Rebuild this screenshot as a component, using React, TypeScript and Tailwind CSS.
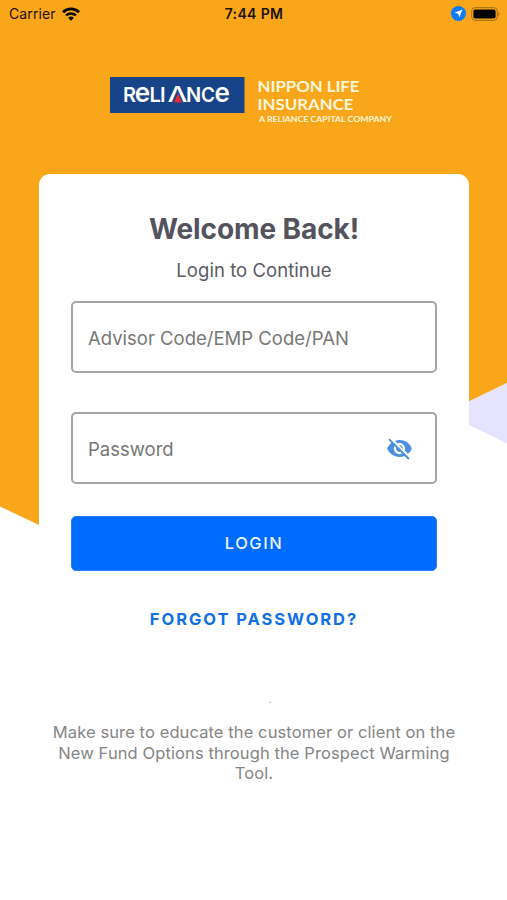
const Backdrop = () => (
  <svg
    className="absolute inset-0 -z-10"
    width="507"
    height="900"
    viewBox="0 0 507 900"
    fill="none"
  >
    <path d="M0 0H507V383L469 401.5 254 630 39 525 0 506.500Z" fill="#faa61a" />
    <path d="M507 383V443.500L469 425V401.500Z" fill="#e6e3fe" />
  </svg>
);

const StatusBar = () => (
  <div className="grid h-[27px] grid-cols-3 items-center pl-[9px] pr-[6px] text-[#1c1303]">
    <div className="flex items-center gap-[6px]">
      <span className="text-[14px] tracking-[0.1px]">Carrier</span>
      <svg width="18" height="14" viewBox="0 0 18 14" fill="none">
        <path d="M1 5.200A11.500 11.500 0 0 1 17 5.200" stroke="#000" strokeWidth="2.800" />
        <path d="M4 8.400A7.300 7.300 0 0 1 14 8.400" stroke="#000" strokeWidth="2.500" />
        <path d="M6.200 10.900A4 4 0 0 1 11.800 10.900L9 13.700Z" fill="#000" />
      </svg>
    </div>
    <span className="-ml-[2px] text-center text-[14px] font-semibold tracking-[0.350px]">
      7:44 PM
    </span>
    <div className="flex items-center justify-end gap-[5px]">
      <svg width="15" height="15" viewBox="0 0 15 15">
        <circle cx="7.500" cy="7.500" r="7.500" fill="#0a7aff" />
        <path d="M11.600 3.400L8.300 11.500 7.300 7.700 3.500 6.700Z" fill="#fff" />
      </svg>
      <svg width="30" height="14" viewBox="0 0 30 14">
        <rect x="0.700" y="0.700" width="25.600" height="12.600" rx="3.500" fill="none" stroke="#9c6a17" strokeWidth="1" />
        <rect x="2.400" y="2.400" width="22.200" height="9.200" rx="2" fill="#000" />
        <path d="M27.500 4.800Q29.700 7 27.500 9.200Z" fill="#9c6a17" />
      </svg>
    </div>
  </div>
);

const Logo = () => (
  <svg
    className="ml-[110px] mt-[49px]"
    width="290"
    height="52"
    viewBox="110 76 290 52"
    fontFamily="Inter, sans-serif"
  >
    <rect x="110" y="77" width="134.500" height="36" fill="#174489" />
    <g fill="#fff" fontWeight="600" fontSize="20">
      <text y="102">
        <tspan x="123">R</tspan>
        <tspan x="134.700" fontSize="26">e</tspan>
        <tspan x="149.500">L</tspan>
        <tspan x="160">I</tspan>
      </text>
      <text x="167.500" y="102" fontSize="21.500" fontWeight="500" textLength="20" lengthAdjust="spacingAndGlyphs">
        Λ
      </text>
      <text y="102">
        <tspan x="186">N</tspan>
        <tspan x="201" textLength="14" lengthAdjust="spacingAndGlyphs">C</tspan>
        <tspan x="214.500" fontSize="26">e</tspan>
      </text>
    </g>
    <path d="M178 93L182 102.500H174Z" fill="#e22a35" />
    <g fill="#fff7dd" fontFamily="Lato, sans-serif" fontWeight="700">
      <text x="257.500" y="91.500" fontSize="15.500" textLength="102" lengthAdjust="spacingAndGlyphs">
        NIPPON LIFE
      </text>
      <text x="257.500" y="109.500" fontSize="15.500" textLength="96" lengthAdjust="spacingAndGlyphs">
        INSURANCE
      </text>
      <text x="259" y="122.300" fontSize="7.500" textLength="133" lengthAdjust="spacingAndGlyphs">
        A RELIANCE CAPITAL COMPANY
      </text>
    </g>
  </svg>
);

const EyeOffIcon = () => (
  <svg width="27" height="27" viewBox="0 0 24 24" fill="#4a90e2">
    <path d="M12 7c2.760 0 5 2.240 5 5 0 .650-.130 1.260-.360 1.830l2.920 2.920c1.510-1.260 2.700-2.890 3.430-4.750-1.730-4.390-6-7.500-11-7.500-1.400 0-2.740.250-3.980.700l2.160 2.160C10.740 7.130 11.350 7 12 7zM2 4.270l2.280 2.280.460.460C3.080 8.300 1.780 10.020 1 12c1.730 4.390 6 7.500 11 7.500 1.550 0 3.030-.300 4.380-.840l.420.420L19.730 22 21 20.730 3.270 3 2 4.270zM7.530 9.800l1.550 1.550c-.050.210-.080.430-.080.650 0 1.660 1.340 3 3 3 .220 0 .440-.030.650-.080l1.550 1.550c-.670.330-1.410.530-2.200.530-2.760 0-5-2.240-5-5 0-.790.200-1.530.530-2.200zm4.310-.780l3.150 3.150.020-.160c0-1.660-1.340-3-3-3l-.170.010z" />
  </svg>
);

const App = () => {
  return (
    <div className="relative isolate h-[900px] w-[507px] overflow-hidden bg-white font-['Inter',sans-serif]">
      <Backdrop />
      <StatusBar />
      <Logo />
      <main className="ml-[39px] mr-[38px] mt-[46px] h-[726px] rounded-t-[11px] bg-white px-8 pt-[37px]">
        <h1 className="text-center text-[28px] font-bold leading-9 tracking-[-0.100px] text-[#53535e]">
          Welcome Back!
        </h1>
        <p className="mt-[9px] text-center text-[18.500px] leading-7 tracking-[0.050px] text-[#5a5a63]">
          Login to Continue
        </p>
        <div className="mt-[17px] flex h-[72px] items-center rounded-[5px] border-2 border-[#a5a5a5] px-[15px] pt-[3px] text-[18.500px] text-[#777]">
          Advisor Code/EMP Code/PAN
        </div>
        <div className="mt-[39px] flex h-[72px] items-center justify-between rounded-[5px] border-2 border-[#a5a5a5] pl-[15px] pr-[22px] text-[18.500px] text-[#777]">
          <span className="pt-[3px]">Password</span>
          <EyeOffIcon />
        </div>
        <button className="mt-8 h-[55px] w-full rounded-[5px] border border-[#2b80f5] bg-[#006bff] text-[16.500px] font-medium tracking-[1.500px] text-[#eaf3ff]">
          LOGIN
        </button>
        <button className="mt-9 block h-6 w-full text-[16.500px] font-bold tracking-[1.950px] text-[#116fea]">
          FORGOT PASSWORD?
        </button>
        <div className="-mx-8 mt-[58px] text-center text-[16.500px] leading-[20.500px] text-[#858585]">
          <p className="pl-8 text-[10px]">.</p>
          <p className="mt-[12.500px] whitespace-nowrap tracking-[0.100px]">
            Make sure to educate the customer or client on the
            <br />
            New Fund Options through the Prospect Warming
            <br />
            Tool.
          </p>
        </div>
      </main>
    </div>
  );
};

export default App;
